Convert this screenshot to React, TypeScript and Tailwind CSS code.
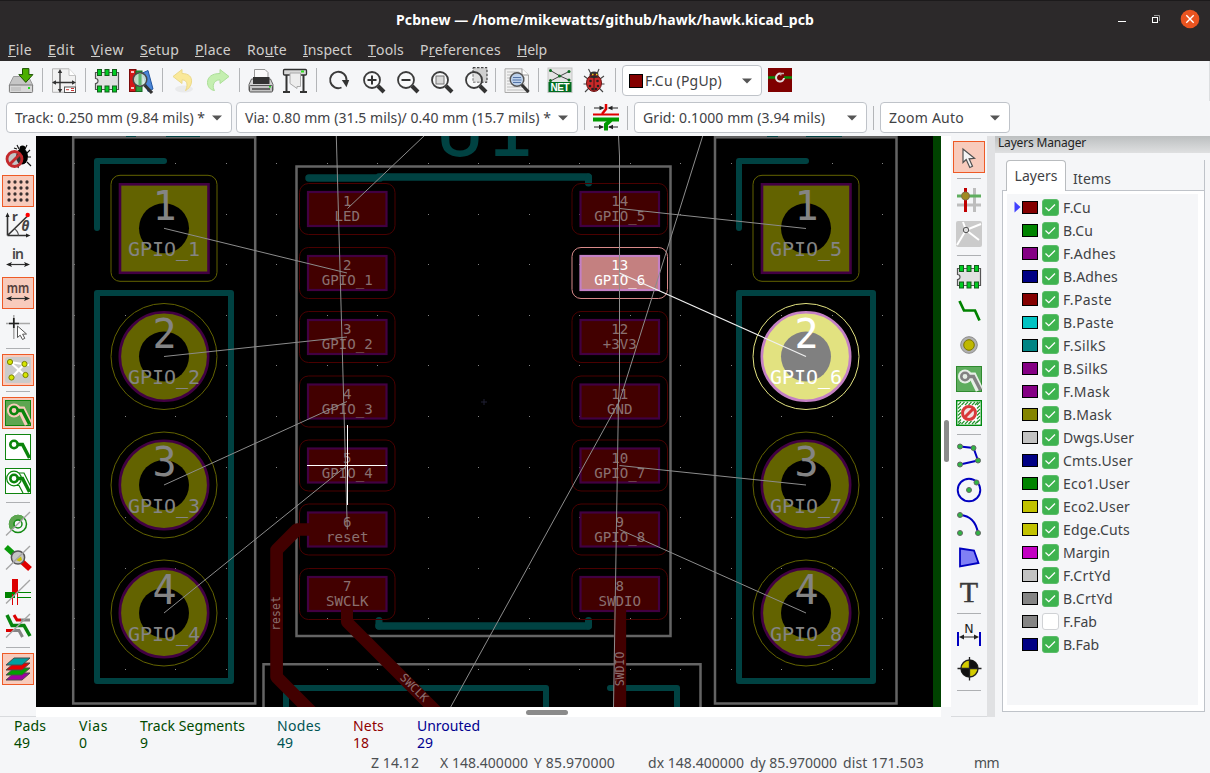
import { useLayoutEffect, useRef, useState, type ReactNode } from "react";

/* Text whose tracking is adjusted so that it fills a given width. */
function Fit({ w, text, u, className = "" }: { w: number; text: string; u?: number; className?: string }) {
  const ref = useRef<HTMLSpanElement>(null);
  const [ls, setLs] = useState(0);
  useLayoutEffect(() => {
    if (!ref.current) return;
    const natural = ref.current.getBoundingClientRect().width;
    setLs((w - natural) / text.length);
  }, []);
  return (
    <span ref={ref} className={`inline-block shrink-0 whitespace-pre ${className}`} style={{ letterSpacing: `${ls}px` }}>
      {u === undefined ? (
        text
      ) : (
        <>
          {text.slice(0, u)}
          <span className="inline-block h-4 border-b border-solid border-[#d0cecc]">{text[u]}</span>
          {text.slice(u + 1)}
        </>
      )}
    </span>
  );
}

const Svg = ({ children }: { children: ReactNode }) => (
  <svg width="26" height="26" viewBox="0 0 26 26" className="block shrink-0 overflow-visible">{children}</svg>
);

/* ---------- shared icon parts ---------- */
const Lens = ({ cx = 13, cy = 12, r = 8 }: { cx?: number; cy?: number; r?: number }) => (
  <>
    <path d={`M${cx + r * 0.75} ${cy + r * 0.75}L${cx + r * 0.75 + 6} ${cy + r * 0.75 + 6}`} stroke="#333" strokeWidth="4" />
    <circle cx={cx} cy={cy} r={r} fill="#fff" fillOpacity=".35" stroke="#3c3c3c" strokeWidth="1.8" />
  </>
);
const Chip = () => (
  <>
    <path d="M1.500 4.500h23v17h-23v-6a2.500 2.500 0 0 0 0-5z" fill="#e0e0e0" stroke="#555" strokeWidth="1.200" />
    {[3.5, 11, 18.5].map((x) => (
      <g key={x} fill="#0c2" stroke="#145c1c" strokeWidth="1">
        <rect x={x} y="1.500" width="4" height="6" />
        <rect x={x} y="18" width="4" height="6" />
      </g>
    ))}
  </>
);
const Trace = ({ c, halo }: { c: string; halo?: string }) => (
  <>
    {halo && <path d="M9.500 10.500H17L23.500 24" fill="none" stroke={halo} strokeWidth="8" />}
    {halo && <circle cx="9" cy="10.500" r="7" fill={halo} />}
    <path d="M10 10.500H17.500L24.500 24" fill="none" stroke={c} strokeWidth="3.400" />
    <circle cx="9" cy="10.500" r="3.700" fill={halo ?? "#fff"} stroke={c} strokeWidth="2.600" />
  </>
);
const Slash = () => <path d="M1 24.500L25 1" stroke="#a5a5a5" strokeWidth="1.300" />;
const Dot = ({ x, y }: { x: number; y: number }) => <circle cx={x} cy={y} r="2.500" fill="#2fb543" stroke="#666" strokeWidth="1" />;

/* ---------- toolbar icons ---------- */
const I: Record<string, ReactNode> = {
  save: (
    <>
      <path d="M1 17.500L5.500 8.500H20.500L25 17.500z" fill="#c6c6c6" stroke="#8a8a8a" strokeWidth=".800" />
      <rect x="1.400" y="17" width="23.200" height="7.500" rx="1" fill="#d8d8d8" stroke="#777" strokeWidth="1" />
      <path d="M4 19v4M6 19v4M8 19v4M10 19v4M12 19v4" stroke="#aaa" strokeWidth=".800" />
      <rect x="20" y="19" width="2" height="2" fill="#2d2" />
      <path d="M14.500 .600h6.400v6h4L17.800 14.400 10.800 6.600h3.700z" fill="#4caf00" stroke="#1c5200" strokeWidth="1" />
    </>
  ),
  page: (
    <>
      <path d="M1.500 .800H18L24.500 7.500V24.300H1.500z" fill="#f2f2f2" stroke="#b5b5b5" />
      <path d="M18 .800V7.500H24.500" fill="#fff" stroke="#c5c5c5" />
      <path d="M9 3v20M2.500 14.500H23" stroke="#333" strokeWidth="1.300" />
      <path d="M9 1l-2.200 4h4.400zM9 25l-2.200-4h4.400zM1 14.500l4-2.200v4.400zM25 14.500l-4-2.200v4.400z" fill="#333" />
      <rect x="13.500" y="19" width="11" height="5.500" fill="#fff" stroke="#555" />
      <path d="M15 21.700h3m2-1.200h3m-3 2h3" stroke="#c33" />
    </>
  ),
  chip: <Chip />,
  lib: (
    <>
      <rect x="1.500" y="1.500" width="6.500" height="22" fill="#d41818" stroke="#7c0c0c" />
      <rect x="8" y="3" width="6" height="20.500" fill="#2ba03a" stroke="#176a22" />
      <path d="M14.500 5L20 2.500L25 21L20 23.500z" fill="#4a86d8" stroke="#2356a0" />
      <path d="M3 20h3M3 4h3" stroke="#fff" strokeWidth="1.500" />
      <path d="M16.500 17L24 25" stroke="#333" strokeWidth="3.200" />
      <circle cx="12" cy="11.500" r="6.800" fill="#d5ebe0" fillOpacity=".85" stroke="#4a4a4a" strokeWidth="1.500" />
      <path d="M12 6v11" stroke="#39a34a" strokeWidth="3" opacity=".7" />
    </>
  ),
  undo: (
    <>
      <ellipse cx="13" cy="21" rx="9" ry="3.500" fill="#e9eaeb" />
      <path d="M2 8.500L11 1.500V5.500C18 5.500 21 9 20.500 14C20.200 18 17 21.500 14.500 22.500C16.500 19 17.500 12 11 11.800V15.500z" fill="#fae99a" stroke="#ecd98a" />
    </>
  ),
  redo: (
    <>
      <path d="M24 8.500L15 1.500V5.500C7 5.500 2.500 9 2.500 14.500C2.500 18.500 5 22 9.500 22.500C7 19 8 12 15 11.800V15.500z" fill="#c4efb0" stroke="#acdf98" />
    </>
  ),
  print: (
    <>
      <path d="M6.500 1.500H17L20 4.500V13H6.500z" fill="#fafafa" stroke="#999" />
      <path d="M3.500 11H22.500L25 16.500V22.500H1V16.500z" fill="#d0d0d0" stroke="#666" />
      <rect x="5" y="9" width="16.500" height="7" fill="#333" />
      <rect x="1.500" y="17.500" width="23" height="6.500" rx="1" fill="#c2c2c2" stroke="#555" />
      <path d="M4 21h18" stroke="#444" strokeWidth="1.500" />
      <path d="M21 18.800h2" stroke="#2d2" strokeWidth="1.500" />
    </>
  ),
  plot: (
    <>
      <path d="M4.500 6V24M21.500 6V24M1 24h7M18 24h7" stroke="#333" strokeWidth="2" />
      <rect x="1.500" y="1.500" width="23" height="5.500" rx="1" fill="#d8d8d8" stroke="#333" strokeWidth="1.300" />
      <rect x="19" y="2.500" width="3" height="2" fill="#3d2" />
      <path d="M8 5h10.500V18.500H15V20.500L8 15.500z" fill="#ededed" stroke="#aaa" />
    </>
  ),
  refresh: (
    <>
      <path d="M16.500 19.500A8.200 8.200 0 1 1 21.500 12" fill="none" stroke="#3a3a3a" strokeWidth="1.900" />
      <path d="M16.800 12h7.400l-2.700 7.200z" fill="#333" />
    </>
  ),
  zin: (
    <>
      <Lens /><path d="M8.500 12h9M13 7.500v9" stroke="#333" strokeWidth="2" />
    </>
  ),
  zout: (
    <>
      <Lens /><path d="M8.500 12h9" stroke="#333" strokeWidth="2" />
    </>
  ),
  zfit: (
    <>
      <Lens /><rect x="9" y="8" width="8" height="8" fill="#d9d9d9" stroke="#777" />
    </>
  ),
  zsel: (
    <>
      <rect x="12" y="-.300" width="14" height="14.500" fill="#cfcfcf" stroke="#222" strokeDasharray="2.500 1.500" />
      <Lens />
    </>
  ),
  find: (
    <>
      <path d="M1 .800H18L24.500 7V24.500H1z" fill="#f2f2f2" stroke="#aaa" />
      <path d="M18 .800V7H24.500" fill="#fff" stroke="#999" />
      <path d="M3 4h12M3 7h12M3 10h18M3 13h18M3 16h18M3 19h18M3 22h18" stroke="#bcbcbc" />
      <path d="M17.500 16.500L24.500 24" stroke="#333" strokeWidth="3.200" />
      <circle cx="13" cy="11.500" r="6.800" fill="#b9cfec" fillOpacity=".9" stroke="#555" strokeWidth="1.400" />
      <path d="M9 9.500h8M8.500 12h9M9 14.500h8" stroke="#5575a8" />
    </>
  ),
  net: (
    <>
      <rect x="1" y="0" width="24" height="24.500" fill="#e4e4e4" stroke="#c5c5c5" />
      <path d="M3.500 2.500L13 8L22 3.500M3.500 13L13 8L22 12" stroke="#444" fill="none" />
      {[[3.500, 2.500], [22, 3.500], [3.500, 12.500], [22, 12], [12.500, 8]].map(([x, y]) => (
        <circle key={`${x}${y}`} cx={x} cy={y} r="1.500" fill="#0a6b1c" />
      ))}
      <rect x="1.500" y="14" width="23" height="10" fill="#006b1f" />
      <text x="13" y="22.600" fontSize="10" fontWeight="700" fill="#fff" textAnchor="middle" textLength="19" fontFamily="Liberation Sans, sans-serif">NET</text>
    </>
  ),
  bug: (
    <>
      <path d="M10 6L7.500 1M16 6L18 1M7 11L3 8M19 11L23 8M6.500 16H2.500M19.500 16H23.500M8 20L4 24M18 20L22 24" stroke="#444" strokeWidth="1.100" />
      <ellipse cx="13" cy="7" rx="4.500" ry="3.500" fill="#333" />
      <ellipse cx="13" cy="15" rx="7.500" ry="8.500" fill="#c92a2a" stroke="#6a1212" />
      <path d="M13 7V23" stroke="#501010" />
      <path d="M7.500 9.500Q13 5 18.500 9.500L13 10z" fill="#2a2a2a" />
      <path d="M11 6.500h1.500M15 6.500h1.500" stroke="#f0d020" strokeWidth="1.600" />
      {[[9.500, 13], [16.500, 13], [9, 18], [17, 18], [11.500, 21], [15, 21]].map(([x, y]) => (
        <circle key={`${x}-${y}`} cx={x} cy={y} r="1.300" fill="#222" />
      ))}
    </>
  ),
  pair: (
    <>
      <rect x="1" y="1" width="24" height="24" fill="#7f0000" />
      <path d="M1 10.500H9M17 10.500H25" stroke="#0a8a0a" strokeWidth="2.600" />
      <path d="M13.500 6.600A4 4 0 1 0 17 11" fill="none" stroke="#e5dcdc" strokeWidth="2" />
      <path d="M13.800 8.500V6.500H17" fill="none" stroke="#c9b0b0" strokeWidth="1.300" />
    </>
  ),
  trackw: (
    <>
      <path d="M13 0V5L9 10" stroke="#e00000" strokeWidth="2.500" fill="none" />
      <path d="M0 10.500H26" stroke="#e00000" strokeWidth="2" />
      <path d="M0 15.500H26" stroke="#009a00" strokeWidth="4" />
      <path d="M18 16L13 20.500V26.500" stroke="#009a00" strokeWidth="4" fill="none" />
      <path d="M1 4H10M16 4h9M1 23h9M16 23h9" stroke="#222" />
      <path d="M11.500 4l-5-2.300v4.600zM14.500 4l5-2.300v4.600zM11 23l-5-2.300v4.600zM15 23l5-2.300v4.600z" fill="#222" />
    </>
  ),
  /* left toolbar */
  nodrc: (
    <>
      <path d="M14 5L12 1M20 5L22 1M22 9l3-3M23 13h3M22 18l4 4M14 20l-1 4M12 5L9 4" stroke="#111" strokeWidth="1.100" />
      <ellipse cx="17" cy="12.500" rx="6" ry="8" fill="#000" />
      <circle cx="17.500" cy="4.500" r="3" fill="#000" />
      <circle cx="9.500" cy="15" r="7.500" fill="#777" fillOpacity=".4" stroke="#c4282c" strokeWidth="2.800" />
      <path d="M4.500 20.500L15 10" stroke="#c4282c" strokeWidth="2.800" />
    </>
  ),
  grid: (
    <>
      {[4, 10, 16, 22].map((x) => [4, 10, 16, 22].map((y) => <circle key={`${x}.${y}`} cx={x} cy={y} r="1.650" fill="#3a3030" />))}
    </>
  ),
  polar: (
    <>
      <path d="M2.500 23.500V3M2.500 23.500H22M2.500 23.500L22 4.500" stroke="#333" strokeWidth="1.600" />
      <path d="M2.500 .500L.500 5h4zM25.500 23.500l-4.500-2v4z" fill="#222" />
      <path d="M9.500 17Q13 19 13.500 23.500" fill="none" stroke="#555" strokeWidth="1.200" />
      <circle cx="22.700" cy="3" r="2.200" fill="#f00" />
      <text x="7" y="9" fontSize="13" fontWeight="700" fill="#444" fontFamily="Noto Sans, sans-serif">r</text>
      <text x="16.500" y="18.500" fontSize="13.500" fontStyle="italic" fontWeight="700" fill="#444" fontFamily="Noto Sans, sans-serif">θ</text>
    </>
  ),
  inch: (
    <>
      <text x="13" y="13" fontSize="14" fontWeight="600" fill="#484848" textAnchor="middle" textLength="12" fontFamily="Noto Sans, sans-serif">in</text>
      <path d="M3 18.500H23" stroke="#333" strokeWidth="1.200" /><path d="M1 18.500l6-2.500-1.300 2.500L7 21zM25 18.500l-6-2.500 1.300 2.500L19 21z" fill="#222" />
    </>
  ),
  mm: (
    <>
      <text x="13" y="13" fontSize="14.500" fontWeight="600" fill="#57403c" textAnchor="middle" textLength="22.500" lengthAdjust="spacingAndGlyphs" fontFamily="Noto Sans, sans-serif">mm</text>
      <path d="M3 18.500H23" stroke="#333" strokeWidth="1.200" /><path d="M1 18.500l6-2.500-1.300 2.500L7 21zM25 18.500l-6-2.500 1.300 2.500L19 21z" fill="#222" />
    </>
  ),
  cursor: (
    <>
      <path d="M1 9.500H25M8.800 1V25" stroke="#a8a8a8" strokeWidth="1.500" />
      <path d="M4 9.500H14M8.800 4V14" stroke="#222" strokeWidth="1.700" />
      <path d="M12.500 12L12.500 23.500L15.200 21.200L17.500 25.500L19.800 24.300L17.600 20.200L21.500 20z" fill="#fff" stroke="#555" />
    </>
  ),
  rats: (
    <>
      <rect x="0" y="0" width="26" height="26" rx="2.500" fill="#cbcbcb" />
      <path d="M5 5L20 18.500M6.500 20.500L19.500 7M5 5L24 8" stroke="#fff" strokeWidth="2.200" />
      {[[5, 5], [19.500, 7], [6.500, 20.500], [20.500, 18]].map(([x, y]) => (
        <circle key={`${x}${y}`} cx={x} cy={y} r="2.600" fill="#d6e600" stroke="#7a8200" />
      ))}
    </>
  ),
  zone1: (
    <>
      <rect x=".500" y=".500" width="25" height="25" fill="#5ea651" stroke="#0f840f" />
      <Trace c="#0b840b" halo="#f8cbbb" />
    </>
  ),
  zone2: (
    <>
      <rect x=".500" y=".500" width="25" height="25" fill="#fff" stroke="#0f840f" />
      <Trace c="#0b840b" />
    </>
  ),
  zone3: (
    <>
      <rect x=".500" y=".500" width="25" height="25" fill="#fff" stroke="#0f840f" />
      <path d="M12 5H19L25.500 18M9 17.500H14L18 25" fill="none" stroke="#0b840b" strokeWidth="1.200" />
      <circle cx="9" cy="10.500" r="7.300" fill="#fff" stroke="#0b840b" strokeWidth="1.200" />
      <Trace c="#0b840b" />
    </>
  ),
  padsk: (
    <>
      <circle cx="13" cy="13" r="8.500" fill="none" stroke="#128a12" strokeWidth="1.500" />
      <path d="M6.500 19.500A9 9 0 0 1 19.500 6.500z" fill="#5ea651" />
      <circle cx="13" cy="13" r="4" fill="#f5f6f8" stroke="#128a12" strokeWidth="1.500" />
      <Slash />
    </>
  ),
  viask: (
    <>
      <path d="M1 2L13 13" stroke="#0a9a0a" strokeWidth="5.500" /><path d="M13 13L25 24" stroke="#e00000" strokeWidth="5.500" />
      <circle cx="13" cy="12.500" r="6.600" fill="#c5c5c5" stroke="#555" strokeWidth="1.500" />
      <path d="M11 15L16 11.500L17 15L14.500 16.500z" fill="#c8c000" />
      <Slash />
    </>
  ),
  tracksk: (
    <>
      <rect x="7" y="0" width="6" height="15" fill="#dc0000" /><rect x="0" y="13" width="10" height="6" fill="#008400" />
      <path d="M7.500 15V26M12.500 15V26" stroke="#dc0000" /><path d="M12 13.500H26M12 18.500H26" stroke="#008400" />
      <Slash />
    </>
  ),
  contrast: (
    <>
      <path d="M9 2L12 7H16" stroke="#dc0000" strokeWidth="3" fill="none" /><path d="M16 7H25" stroke="#858585" strokeWidth="3" />
      <path d="M2 2L7 12.500H19L25 23" stroke="#08840f" strokeWidth="3.500" fill="none" />
      <path d="M1 17.500H8" stroke="#dc0000" strokeWidth="3" /><path d="M8 17.500H14L17.500 24" stroke="#858585" strokeWidth="3" fill="none" />
      <Slash />
    </>
  ),
  layers: (
    <>
      {[["#a000a0", 17], ["#00a000", 12], ["#e80000", 7], ["#00a0a0", 2]].map(([c, y]) => (
        <path key={c as string} d={`M9 ${y}H25L17 ${(y as number) + 7}H1z`} fill={c as string} stroke="#4a4a4a" strokeWidth="1" />
      ))}
    </>
  ),
  /* right toolbar */
  arrow: <path d="M7 5V18.500L10.200 15.500L13.800 23.500L16.500 22.300L13.100 14.800L18.500 14.300z" fill="#f4f4f4" stroke="#505050" strokeWidth="1.200" />,
  hl: (
    <>
      <path d="M18.500 1V25M1 18H25" stroke="#bdbdbd" strokeWidth="3" />
      <path d="M1 9H25" stroke="#5fae5f" strokeWidth="3" /><path d="M9.500 1V25" stroke="#c00000" strokeWidth="3" />
      <circle cx="9.500" cy="9" r="4" fill="#a08a20" stroke="#80704a" />
    </>
  ),
  localrats: (
    <>
      <rect width="26" height="26" rx="2" fill="#cbcbcb" />
      <path d="M10 9L7 1M10 9L25 3M10 9L1 24M10 9L23 19" stroke="#fff" strokeWidth="2" />
      <circle cx="10" cy="9" r="2.700" fill="#ddd" stroke="#555" />
    </>
  ),
  route: <path d="M3.500 3L8 12.500H19L23.500 22.500" fill="none" stroke="#008200" strokeWidth="2.700" />,
  via: (
    <>
      <circle cx="13" cy="13" r="8.300" fill="#b0b0b0" stroke="#8a8a8a" /><circle cx="13" cy="13" r="5.300" fill="#bfb800" stroke="#7a7400" />
    </>
  ),
  addzone: (
    <>
      <rect x=".500" y=".500" width="25" height="25" fill="#5ead5e" stroke="#2f8a2f" />
      <Trace c="#828282" halo="#e6efe6" />
    </>
  ),
  keepout: (
    <>
      <rect x=".700" y=".700" width="24.600" height="24.600" fill="#fff" stroke="#008a10" strokeWidth="1.400" />
      <path d="M2 5L5 2M2 8.500L5 5.500M2 12L5 9M2 15.500L5 12.500M2 19L5 16M2 22.500L5 19.500M21 5L24 2M21 8.500L24 5.500M21 12L24 9M21 15.500L24 12.500M21 19L24 16M21 22.500L24 19.500M5.500 5L8.500 2M9 5L12 2M12.500 5L15.500 2M16 5L19 2M19 5L22 2M5.500 24L8.500 21M9 24L12 21M12.500 24L15.500 21M16 24L19 21M19 24L22 21M2 25L5 22" stroke="#25962f" strokeWidth="1.200" />
      <circle cx="13" cy="13" r="6.500" fill="#f0e2e2" stroke="#d93a3a" strokeWidth="3" /><path d="M8.500 17.500L17.500 8.500" stroke="#d93a3a" strokeWidth="3" />
    </>
  ),
  poly: (
    <>
      <path d="M4 3.500L17.500 5L22 17.500L4 21.500" fill="none" stroke="#0000c0" strokeWidth="2" />
      <Dot x={4} y={3.500} /><Dot x={17.500} y={5} /><Dot x={22} y={17.500} /><Dot x={4} y={21.500} />
    </>
  ),
  circle: (
    <>
      <circle cx="13" cy="13" r="11.300" fill="none" stroke="#0000c0" strokeWidth="1.900" /><Dot x={13} y={13} /><Dot x={20.500} y={5.500} />
    </>
  ),
  arc: (
    <>
      <path d="M4 4Q19 5 22 22" fill="none" stroke="#0000c0" strokeWidth="2" /><Dot x={4} y={4} /><Dot x={4} y={22} /><Dot x={22} y={22} />
    </>
  ),
  gpoly: <path d="M4 3.500L18 5.500L22.500 18L4 21.500z" fill="#8080f5" stroke="#0000c0" strokeWidth="1.800" />,
  text: <text x="13" y="23" fontSize="30" fill="#3a3a3a" stroke="#3a3a3a" strokeWidth=".500" textAnchor="middle" fontFamily="Liberation Serif, serif">T</text>,
  dim: (
    <>
      <path d="M2 10V24M24 10V24" stroke="#0000c0" strokeWidth="2" /><path d="M5 15H21" stroke="#222" /><path d="M3 15l5-2.500v5zM23 15l-5-2.500v5z" fill="#222" />
      <text x="13" y="10.500" fontSize="12.500" fontWeight="500" fill="#222" textAnchor="middle" fontFamily="DejaVu Sans, sans-serif">N</text>
    </>
  ),
  origin: (
    <>
      <circle cx="13.500" cy="12.500" r="8.500" fill="#d4cc00" stroke="#222" strokeWidth="1.400" />
      <path d="M13.500 12.500V4A8.500 8.500 0 0 1 22 12.500zM13.500 12.500V21A8.500 8.500 0 0 1 5 12.500z" fill="#111" />
      <path d="M13.500 1V24.500M1.500 12.500H25.500" stroke="#222" strokeWidth="1.300" />
    </>
  ),
};

const TopRow = ["save", "|", "page", "|", "chip", "lib", "|", "undo", "redo", "|", "print", "plot", "|", "refresh", "zin", "zout", "zfit", "zsel", "|", "find", "|", "net", "bug", "|"];
const LeftCol = ["nodrc", "*grid", "polar", "inch", "*mm", "cursor", "|", "*rats", "|", "*zone1", "zone2", "zone3", "|", "padsk", "viask", "tracksk", "contrast", "|", "*layers"];
const RightCol = ["*arrow", "|", "hl", "localrats", "|", "chip", "route", "via", "addzone", "keepout", "|", "poly", "circle", "arc", "gpoly", "text", "|", "dim", "origin", "|"];

const VSep = () => (
  <div className="flex w-[9px] shrink-0 justify-center pt-[7px]">
    <div className="h-6 w-px bg-[#b3b5b8]" />
  </div>
);

function Combo({ className, children }: { className: string; children: ReactNode }) {
  return (
    <div className={`flex h-[31px] shrink-0 items-center justify-between rounded-[4px] border border-[#bfc3c9] bg-white pl-2 pr-[9px] text-[14px] text-[#3f4245] ${className}`}>
      <div className="flex items-center">{children}</div>
      <svg width="10" height="6" viewBox="0 0 10 6"><path d="M0 .500H10L5 5.500z" fill="#555" /></svg>
    </div>
  );
}

function SideBar({ items, className }: { items: string[]; className: string }) {
  return (
    <div className={`flex w-9 shrink-0 flex-col items-center border-b border-[#d9dbde] bg-[#f5f6f8] pt-1 ${className}`}>
      {items.map((k, i) =>
        k === "|" ? (
          <div key={i} className="flex h-[9px] w-6 items-center"><div className="h-px w-full bg-[#aeb0b3]" /></div>
        ) : (
          <div key={i} className="flex h-[34px] w-9 items-center justify-center">
            <div className={k[0] === "*" ? "flex h-8 w-8 items-center justify-center border border-[#ee5a26] bg-[#f8cbbc]" : "flex h-8 w-8 items-center justify-center"}>
              <Svg>{I[k.replace("*", "")]}</Svg>
            </div>
          </div>
        )
      )}
    </div>
  );
}

/* ---------- board ---------- */
const MONO = "DejaVu Sans Mono, monospace";
const ROWS = [209, 273, 337, 401.5, 465.5, 529.5, 594];
const LEFT_NETS = ["LED", "GPIO_1", "GPIO_2", "GPIO_3", "GPIO_4", "reset", "SWCLK"];
const RIGHT_NETS = ["GPIO_5", "GPIO_6", "+3V3", "GND", "GPIO_7", "GPIO_8", "SWDIO"];

function SmdPad({ x, y, n, net, hot }: { x: number; y: number; n: number; net: string; hot?: boolean }) {
  return (
    <g>
      <rect x={x - 47.500} y={y - 25.500} width="95.500" height="51" rx="9" fill="none" stroke={hot ? "#d88a8a" : "#4a0000"} />
      <rect x={x - 39} y={y - 17} width="78.500" height="34" fill={hot ? "#c48080" : "#420000"} stroke={hot ? "#c480c4" : "#420042"} strokeWidth="2.200" />
      <g fill={hot ? "#fff" : "#8a7070"} fontFamily={MONO} fontSize="14.100" textAnchor="middle">
        <text x={x + 0.300} y={y - 3}>{n}</text>
        <text x={x + 0.300} y={y + 12}>{net}</text>
      </g>
    </g>
  );
}

function ThPad({ x, y, n, net, hot }: { x: number; y: number; n: number; net: string; hot?: boolean }) {
  const cu = hot ? "#e2e280" : "#636300";
  const mask = hot ? "#c480c4" : "#420042";
  return (
    <g>
      {n === 1 ? (
        <>
          <rect x={x - 53} y={y - 53} width="106" height="106" rx="9" fill="none" stroke={cu} />
          <rect x={x - 44} y={y - 44} width="88.500" height="88.500" fill={cu} stroke={mask} strokeWidth="2.600" />
        </>
      ) : (
        <>
          <circle cx={x} cy={y} r="53" fill="none" stroke={cu} />
          <circle cx={x} cy={y} r="44.200" fill={cu} stroke={mask} strokeWidth="2.600" />
        </>
      )}
      <circle cx={x} cy={y} r="25" fill={hot ? "#808080" : "#000"} />
      <g fill={hot ? "#fff" : "#848484"} fontFamily={MONO} textAnchor="middle">
        <text x={x + 0.500} y={y - 8.700} fontSize="40">{n}</text>
        <text x={x} y={y + 27.900} fontSize="20">{net}</text>
      </g>
    </g>
  );
}

function Board() {
  const dots: ReactNode[] = [];
  for (let i = 0; i < 18; i++)
    for (let j = 0; j < 11; j++)
      dots.push(<rect key={`${i}-${j}`} x={Math.round(74 + 50.500 * i)} y={Math.round(163 + 50.600 * j)} width="1" height="1" fill="#848484" />);
  const ys = [228.300, 356.500, 485, 613];
  return (
    <svg width="905" height="571" viewBox="36 136 905 571" className="block">
      <rect x="36" y="136" width="905" height="571" fill="#000" />
      {dots}
      <path d="M484 399v6M481 402h6" stroke="#202034" strokeWidth="1" />
      <rect x="933" y="136" width="8" height="571" fill="#004200" />
      <g fill="none" stroke="#004242" strokeWidth="6" strokeLinecap="round" strokeLinejoin="round">
        {[0, 642].map((o) => (
          <g key={o}>
            <path d={`M${97 + o} 228V161H${164 + o}`} />
            <path d={`M${97 + o} 293H${231 + o}V681H${97 + o}z`} />
          </g>
        ))}
        <path d="M309 178H380M379 177H588M379 626H588" strokeWidth="7.500" />
        <path d="M588.500 177V183M379 626V620.500M588.500 626V620.500" strokeWidth="7" />
        <path d="M286 710V688H546V710M610 688H677V710" />
      </g>
      <text x="484.500" y="156" fontSize="82" fontFamily={MONO} fill="#004242" textAnchor="middle">U1</text>
      <g fill="none" stroke="#646464" strokeWidth="2.500">
        <rect x="73.200" y="137.300" width="182" height="566.200" />
        <rect x="715" y="137.300" width="181.500" height="566.200" />
        <rect x="296.500" y="166.500" width="374" height="469.500" />
        <path d="M263.500 710V664.200H700.500V710" />
      </g>
      <path d="M126 136.500h10M166 136.500h34M767 136.500h11M806 136.500h36" stroke="#004242" />

      {ROWS.map((y, i) => <SmdPad key={`l${i}`} x={347} y={y} n={i + 1} net={LEFT_NETS[i]} />)}
      {ROWS.map((y, i) => <SmdPad key={`r${i}`} x={619.500} y={y} n={14 - i} net={RIGHT_NETS[i]} hot={i === 1} />)}
      {ys.map((y, i) => <ThPad key={`a${i}`} x={164} y={y} n={i + 1} net={`GPIO_${i + 1}`} />)}
      {ys.map((y, i) => <ThPad key={`b${i}`} x={806} y={y} n={i + 1} net={`GPIO_${i + 5}`} hot={i === 1} />)}

      <g fill="none" stroke="#420000" strokeWidth="12.700" strokeLinejoin="round">
        <path d="M310 529.500H297L276.600 550V677L312 712.500" />
        <path d="M347 610V622L436 711" strokeWidth="12" />
        <path d="M620 610V710" strokeWidth="12.300" />
      </g>
      <g fill="#8a7070" fontFamily={MONO} fontSize="11.500" textAnchor="middle">
        <text transform="translate(279.800 613.500) rotate(-90)">reset</text>
        <text transform="translate(411.500 690.500) rotate(45)">SWCLK</text>
        <text transform="translate(623.500 669) rotate(-90)">SWDIO</text>
      </g>

      <g fill="none" stroke="#8c8c8c" strokeWidth="1">
        <path d="M336.300 136L347.300 529.500M347.500 208.500L424 136" />
        <path d="M164 228.300L347 273M164 356.500L347 337M164 485L347 401.500M164 613L347 465.500" />
        <path d="M618.500 136L619.500 156V384L618.500 400L613.500 707" />
        <path d="M619.500 208.500L806 228.500M619.500 401L702.700 136M619.500 401L450.700 707M619.500 465.500L806 485M619.500 529.500L806 613" />
        <path d="M619.500 273L806 356.500" stroke="#f0f0f0" strokeWidth="1.200" />
      </g>
      <path d="M347.500 425V505M307 465.500H387" stroke="#fff" strokeWidth="1" />
    </svg>
  );
}

const MENU: [string, number, number, string][] = [
  ["File", 0, 24, "w-10"], ["Edit", 0, 27, "w-[43px]"], ["View", 0, 33, "w-[49px]"], ["Setup", 0, 39, "w-[55px]"], ["Place", 0, 36, "w-[52px]"],
  ["Route", 2, 40, "w-14"], ["Inspect", 0, 49, "w-[65px]"], ["Tools", 0, 36, "w-[52px]"], ["Preferences", 1, 81, "w-[97px]"], ["Help", 0, 30, "w-[46px]"],
];

const LAYERS: [string, string, number][] = [
  ["F.Cu", "bg-[#840000]", 28], ["B.Cu", "bg-[#008400]", 30], ["F.Adhes", "bg-[#840084]", 53], ["B.Adhes", "bg-[#000084]", 55],
  ["F.Paste", "bg-[#840000]", 49], ["B.Paste", "bg-[#00c2c2]", 51], ["F.SilkS", "bg-[#008484]", 43], ["B.SilkS", "bg-[#840084]", 45],
  ["F.Mask", "bg-[#840084]", 47], ["B.Mask", "bg-[#848400]", 49], ["Dwgs.User", "bg-[#c2c2c2]", 71], ["Cmts.User", "bg-[#000084]", 70],
  ["Eco1.User", "bg-[#008400]", 67], ["Eco2.User", "bg-[#c2c200]", 67], ["Edge.Cuts", "bg-[#c2c200]", 67], ["Margin", "bg-[#c200c2]", 47],
  ["F.CrtYd", "bg-[#c2c2c2]", 48], ["B.CrtYd", "bg-[#848484]", 50], ["F.Fab", "bg-[#848484]", 34], ["B.Fab", "bg-[#000084]", 36],
];

const STATS: [string, string, number, string, number][] = [
  ["Pads", "49", 32, "w-[65px] text-[#004a00]", 16], ["Vias", "0", 29, "w-[61px] text-[#004a00]", 9], ["Track Segments", "9", 105, "w-[137px] text-[#004a00]", 8],
  ["Nodes", "49", 44, "w-[76px] text-[#005454]", 16], ["Nets", "18", 31, "w-16 text-[#900000]", 16], ["Unrouted", "29", 63, "w-20 text-[#000090]", 16],
];

const STATUS: [string, number, string][] = [
  ["Z 14.12", 48, "w-[69px]"], ["X 148.400000", 88, "w-[94px]"], ["Y 85.970000", 81, "w-[114px]"], ["dx 148.400000", 96, "w-[102px]"],
  ["dy 85.970000", 87, "w-[93px]"], ["dist 171.503", 81, "w-[131px]"], ["mm", 25, "w-10"],
];

export default function App() {
  return (
    <div className="flex h-[773px] w-[1210px] flex-col overflow-hidden bg-[#f5f6f8] font-['Noto_Sans',sans-serif] text-[14px] leading-[17px] text-[#3f4245]">
      <header className="h-[61px] shrink-0 border-t border-[#1c1a1b] bg-[#2c292a]">
        <div className="flex h-[37px] items-center pb-px">
          <div className="w-[396px]" />
          <Fit w={418} text="Pcbnew — /home/mikewatts/github/hawk/hawk.kicad_pcb" className="text-[14px] font-bold text-white" />
          <svg width="90" height="24" viewBox="1110 7 90 24" className="ml-auto mr-[10px]">
            <path d="M1118 21.500h8" stroke="#fff" />
            <rect x="1152.500" y="17.500" width="5" height="5" fill="none" stroke="#fff" />
            <path d="M1154 15.500H1159.500V21" fill="none" stroke="#999" />
            <circle cx="1190" cy="19" r="9.300" fill="#e95420" />
            <path d="M1186.300 15.300l7.400 7.400M1193.700 15.300l-7.400 7.400" stroke="#fff" strokeWidth="1.400" />
          </svg>
        </div>
        <nav className="flex h-[23px] items-start pl-2 pt-[3px] text-[#d0cecc]">
          {MENU.map(([t, u, w, c]) => <div key={t} className={c}><Fit w={w} text={t} u={u} /></div>)}
        </nav>
      </header>

      <div className="flex h-10 shrink-0 items-start border-r border-[#dcdee0] pl-1">
        {TopRow.map((k, i) => k === "|" ? <VSep key={i} /> : (
          <div key={i} className="flex w-[34px] shrink-0 justify-center pt-[7px]"><Svg>{I[k]}</Svg></div>
        ))}
        <Combo className="ml-[2px] mt-1 w-[140px] pl-[6px]">
          <div className="mr-[2px] h-[14px] w-[14px] border border-black bg-[#840000]" />
          <Fit w={77} text="F.Cu (PgUp)" />
        </Combo>
        <div className="ml-[5px] pt-[6px]"><Svg>{I.pair}</Svg></div>
      </div>
      <div className="flex h-[35px] shrink-0 items-start pl-[6px] pt-px">
        <Combo className="w-[226px]"><Fit w={190} text="Track: 0.250 mm (9.84 mils) *" /></Combo>
        <Combo className="ml-1 w-[342px]"><Fit w={306} text="Via: 0.80 mm (31.5 mils)/ 0.40 mm (15.7 mils) *" /></Combo>
        <div className="ml-[2px] flex pt-px"><div className="-mt-[4px]"><VSep /></div><div className="w-[34px] px-1 pt-px"><Svg>{I.trackw}</Svg></div><div className="-mt-[4px]"><VSep /></div></div>
        <Combo className="ml-[2px] w-[233px]"><Fit w={182} text="Grid: 0.1000 mm (3.94 mils)" /></Combo>
        <div className="ml-[2px] -mt-[3px]"><VSep /></div>
        <Combo className="ml-[2px] w-[130px]"><Fit w={75} text="Zoom Auto" /></Combo>
      </div>

      <main className="flex h-[581px] shrink-0">
        <SideBar items={LeftCol} className="h-[581px]" />
        <div className="w-[915px] shrink-0">
          <div className="flex h-[571px]">
            <Board />
            <div className="w-[10px] bg-white pl-[3px] pt-[284px]"><div className="h-[42px] w-[5px] rounded-full bg-[#8b8b8b]" /></div>
          </div>
          <div className="h-[10px] w-[905px] bg-white pl-[490px] pt-[3px]"><div className="h-[5px] w-[42px] rounded-full bg-[#8b8b8b]" /></div>
        </div>
        <SideBar items={RightCol} className="h-[581px]" />
        <div className="w-2 shrink-0 bg-[#e0e1e3]" />
        <aside className="flex w-[215px] shrink-0 flex-col">
          <div className="flex h-[17px] items-start bg-linear-to-b from-[#bcbfc0] to-[#dfe0e1] pl-[3px] text-[12px] leading-[15px] text-[#222]"><Fit w={88} text="Layers Manager" className="-mt-px" /></div>
          <div className="ml-[7px] mt-[7px] flex w-[203px] flex-col border-r border-[#bfc3c9]">
            <div className="flex h-[31px]">
              <div className="w-1 shrink-0 border-b border-[#bfc3c9]" />
              <div className="flex w-[60px] shrink-0 justify-center rounded-t-[4px] border border-b-0 border-[#b9bcbf] bg-white pt-[6px]"><Fit w={43} text="Layers" /></div>
              <div className="flex-1 border-b border-[#bfc3c9] pl-[7px] pt-[10px]"><Fit w={38} text="Items" /></div>
            </div>
            <div className="h-[521px] border-b border-l border-[#bfc3c9] bg-white pb-[6px] pl-1 pr-[6px] pt-[3px]">
              <div className="h-full bg-[#f5f6f8] pt-[2px]">
                {LAYERS.map(([name, bg, w], i) => (
                  <div key={name} className="flex h-[23px] items-center pl-[7px]">
                    <svg width="8" height="12" viewBox="0 0 8 12" className="-mt-[2px]">{i === 0 && <path d="M.500 .500L6.500 6L.500 11.500z" fill="#4040ff" />}</svg>
                    <div className={`h-[13px] w-4 border border-black ${bg}`} />
                    {name === "F.Fab" ? (
                      <div className="ml-1 h-[17px] w-[17px] rounded-[3px] border border-[#d0d2d5] bg-white" />
                    ) : (
                      <div className="ml-1 h-[17px] w-[17px] rounded-[3px] border border-[#5cbc6a] bg-[#3eb34f]">
                        <svg width="15" height="15" viewBox="0 0 15 15"><path d="M2.500 7.500l3.300 3.200L12 4.500" fill="none" stroke="#fff" strokeWidth="1.300" /></svg>
                      </div>
                    )}
                    <div className="ml-1 h-[18px]"><Fit w={w} text={name} /></div>
                  </div>
                ))}
              </div>
            </div>
          </div>
        </aside>
      </main>

      <section className="flex h-9 shrink-0 pl-[14px]">
        {STATS.map(([a, b, w, c, w2]) => (
          <div key={a} className={`shrink-0 ${c}`}>
            <div className="flex h-[17px]"><Fit w={w} text={a} /></div>
            <div className="flex h-[17px]"><Fit w={w2} text={b} /></div>
          </div>
        ))}
      </section>
      <footer className="flex h-5 shrink-0 items-start pl-[371px] pt-px text-[#4c4f52]">
        {STATUS.map(([t, w, c]) => <div key={t} className={`shrink-0 ${c}`}><Fit w={w} text={t} /></div>)}
      </footer>
    </div>
  );
}
